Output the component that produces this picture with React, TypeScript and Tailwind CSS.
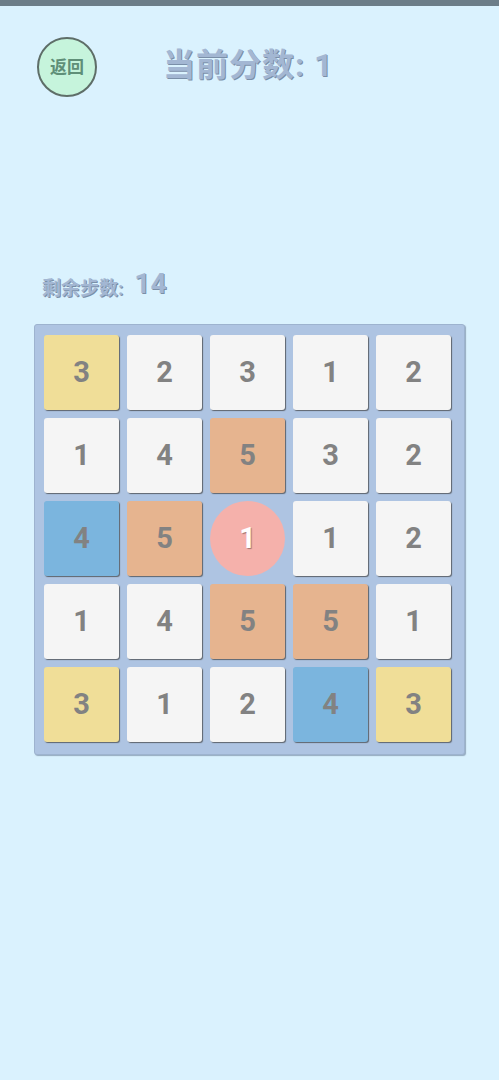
import React from "react";

type Cell = { n: number; c: "w" | "y" | "o" | "b" | "p" };

const board: Cell[][] = [
  [{ n: 3, c: "y" }, { n: 2, c: "w" }, { n: 3, c: "w" }, { n: 1, c: "w" }, { n: 2, c: "w" }],
  [{ n: 1, c: "w" }, { n: 4, c: "w" }, { n: 5, c: "o" }, { n: 3, c: "w" }, { n: 2, c: "w" }],
  [{ n: 4, c: "b" }, { n: 5, c: "o" }, { n: 1, c: "p" }, { n: 1, c: "w" }, { n: 2, c: "w" }],
  [{ n: 1, c: "w" }, { n: 4, c: "w" }, { n: 5, c: "o" }, { n: 5, c: "o" }, { n: 1, c: "w" }],
  [{ n: 3, c: "y" }, { n: 1, c: "w" }, { n: 2, c: "w" }, { n: 4, c: "b" }, { n: 3, c: "y" }],
];

const tileColor: Record<string, string> = {
  w: "bg-[#f5f5f5]",
  y: "bg-[#f0de98]",
  o: "bg-[#e6b48f]",
  b: "bg-[#7bb5de]",
};

const font = { fontFamily: 'Roboto, "Noto Sans CJK SC", sans-serif' };

const Tile = ({ cell }: { cell: Cell }) => {
  if (cell.c === "p") {
    return (
      <div className="w-[75px] h-[75px] rounded-full bg-[#f5b1ab] flex items-center justify-center text-[29px] font-bold text-white [text-shadow:1px_1px_1px_rgba(0,0,0,0.35)]">
        {cell.n}
      </div>
    );
  }
  return (
    <div
      className={`w-[75px] h-[75px] rounded-[3px] ${tileColor[cell.c]} shadow-[1px_1px_1px_rgba(60,60,60,0.7)] flex items-center justify-center text-[29px] font-bold text-[#828282]`}
    >
      {cell.n}
    </div>
  );
};

export default function App() {
  return (
    <div className="min-h-screen bg-[#daf2fe] flex flex-col" style={font}>
      <div className="h-[6px] bg-[#6c7d88]" />

      {/* header */}
      <div className="flex items-center pl-[37px] pt-[31px]">
        <button className="w-[60px] h-[60px] rounded-full bg-[#c6f4dc] border-2 border-[#5e6e68] flex items-center justify-center text-[17px] font-bold text-[#5f8f78] leading-none">
          返回
        </button>
        <div className="ml-[66px] -mt-[4px] text-[32px] font-bold text-[#a3b7d3] leading-none [text-shadow:1px_1px_0_#7a8fa8] tracking-[1px]">
          当前分数: 1
        </div>
      </div>

      {/* steps */}
      <div className="flex items-end pl-[42px] mt-[173px]">
        <span className="text-[19px] font-bold text-[#a3b7d3] [text-shadow:1px_1px_0_#7a8fa8] leading-none">
          剩余步数:
        </span>
        <span className="ml-[11px] text-[28px] font-bold text-[#a3b7d3] [text-shadow:1px_1px_0_#7a8fa8] leading-none">
          14
        </span>
      </div>

      {/* board */}
      <div className="ml-[34px] mt-[26px] w-[431px] h-[431px] bg-[#aec4e2] border border-[#9db3cf] rounded-[3px] shadow-[1px_1px_1px_rgba(80,100,130,0.5)] pl-[9px] pt-[10px]">
        <div className="grid grid-cols-[repeat(5,75px)] gap-[8px]">
          {board.flat().map((cell, i) => (
            <Tile key={i} cell={cell} />
          ))}
        </div>
      </div>
    </div>
  );
}
